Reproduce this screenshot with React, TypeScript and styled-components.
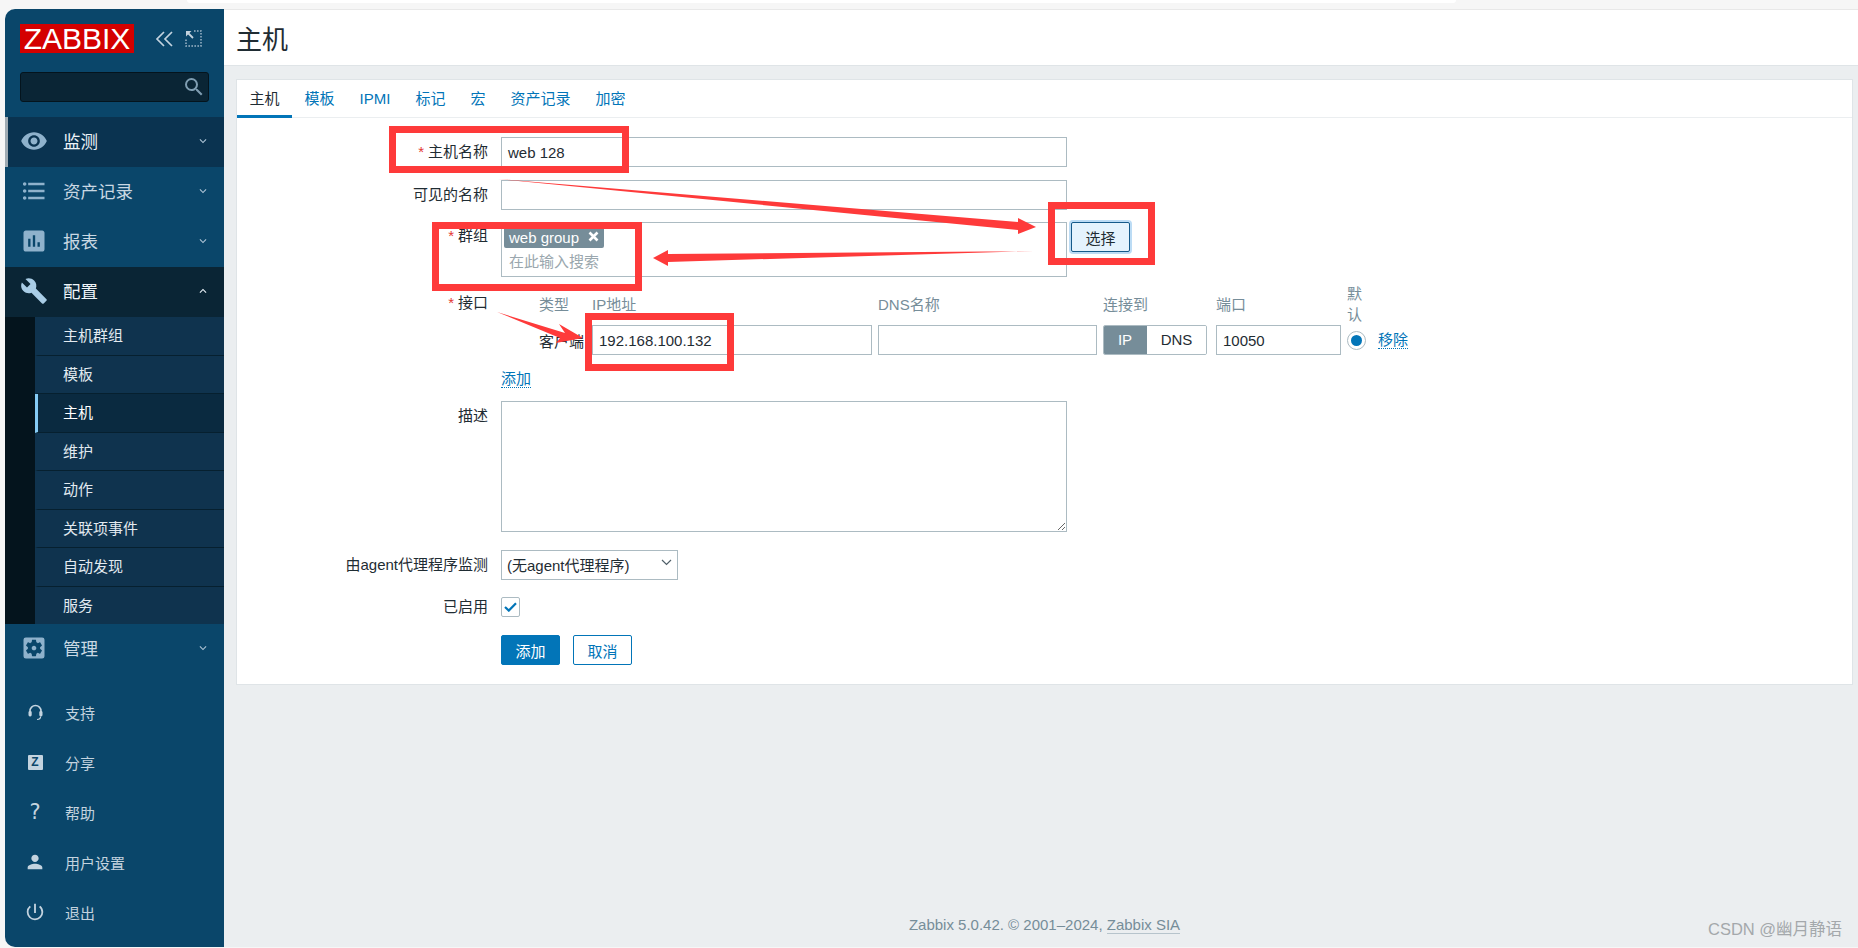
import React from 'react';
import styled, { createGlobalStyle } from 'styled-components';
import {
  MdVisibility, MdFormatListBulleted, MdAssessment, MdBuild, MdSettingsApplications,
  MdPerson, MdPowerSettingsNew, MdSearch,
  MdKeyboardArrowDown, MdKeyboardArrowUp,
} from 'react-icons/md';

const FONT = `"Liberation Sans", "Noto Sans CJK SC", sans-serif`;

const Global = createGlobalStyle`
  html, body { margin: 0; padding: 0; width: 1858px; height: 948px; overflow: hidden; background: #f6f6f6; }
  * { box-sizing: border-box; }
  body { font-family: ${FONT}; font-size: 15px; color: #1f2c33; }
`;

const Page = styled.div`
  position: relative;
  width: 1858px;
  height: 948px;
  display: flex;
  flex-direction: column;
`;

const BrowserStrip = styled.div`
  height: 9px;
  padding-left: 187px;
`;

const BrowserTab = styled.div`
  width: 1269px;
  height: 3px;
  background: #fff;
  border-radius: 0 0 8px 8px;
`;

const Shell = styled.div`
  height: 938px;
  padding-left: 5px;
  display: flex;
`;

const Sidebar = styled.aside`
  width: 219px;
  flex: none;
  background: #0a466a;
  border-radius: 10px 0 0 10px;
  display: flex;
  flex-direction: column;
  overflow: hidden;
`;

const BrandBlock = styled.div`
  height: 108px;
  padding: 15px 15px 0;
  flex: none;
`;

const BrandRow = styled.div`
  display: flex;
  align-items: center;
  height: 29px;
`;

const Logo = styled.div`
  flex: none;
  width: 114px;
  height: 29px;
  background: #d40000;
  color: #fff;
  font-family: "Liberation Sans", sans-serif;
  font-size: 30px;
  line-height: 29px;
  text-align: center;
  margin-right: 21px;
`;

const BrandIcon = styled.svg`
  display: block;
  flex: none;
  margin-right: 12px;
  &:last-child { margin-right: 0; }
`;

const SearchBox = styled.div`
  margin-top: 19px;
  width: 189px;
  height: 30px;
  background: #0a2535;
  border: 1px solid #04141d;
  border-radius: 3px;
  display: flex;
  align-items: center;
  justify-content: flex-end;
  padding-right: 2px;
  color: #7f9db1;
  font-size: 24px;
`;

const NavRow = styled.div<{ $tone?: 'hover' | 'open' }>`
  height: 50px;
  flex: none;
  display: flex;
  align-items: center;
  background: ${p => (p.$tone === 'hover' ? '#0a3350' : p.$tone === 'open' ? '#0a2535' : 'transparent')};
  border-left: 3px solid ${p => (p.$tone === 'hover' ? '#9fabb3' : 'transparent')};
  padding: 0 0 3px 12px;
  color: ${p => (p.$tone ? '#eef4f8' : '#c9d8e3')};
  font-size: 17.5px;
`;

const NavIcon = styled.span<{ $light?: boolean }>`
  width: 28px;
  height: 28px;
  margin-right: 15px;
  margin-left: 0;
  display: flex;
  align-items: center;
  justify-content: center;
  font-size: 28px;
  color: ${p => (p.$light ? '#a9cde6' : '#8fb2cc')};
`;

const NavLabel = styled.span`
  flex: 1;
`;

const NavChevron = styled.span<{ $light?: boolean }>`
  width: 16px;
  margin-right: 13px;
  display: flex;
  justify-content: center;
  font-size: 14px;
  color: ${p => (p.$light ? '#e6eef4' : '#a9c1d2')};
`;

const SubMenu = styled.div`
  height: 307px;
  flex: none;
  padding-left: 30px;
  background: #04141d;
  display: flex;
  flex-direction: column;
`;

const SubItem = styled.div<{ $active?: boolean }>`
  flex: 1;
  display: flex;
  align-items: center;
  background: ${p => (p.$active ? '#0a2a40' : '#0f334e')};
  border-bottom: 1px solid #06202f;
  border-left: 3px solid ${p => (p.$active ? '#85cbf5' : 'transparent')};
  padding: 0 0 2px 25px;
  color: ${p => (p.$active ? '#fff' : '#e2eaf0')};
  font-size: 15px;
  &:last-child { border-bottom: 0; }
`;

const BottomNav = styled.div`
  margin-top: auto;
  padding-bottom: 9px;
  display: flex;
  flex-direction: column;
`;

const BottomItem = styled.div`
  height: 50px;
  padding-bottom: 2px;
  display: flex;
  align-items: center;
  color: #c3d3df;
  font-size: 15px;
`;

const BottomIcon = styled.span`
  width: 24px;
  margin-left: 18px;
  margin-right: 18px;
  display: flex;
  justify-content: center;
  font-size: 22px;
  color: #c3d3df;
`;

const ZBadge = styled.span`
  width: 15px;
  height: 15px;
  background: #c3d3df;
  color: #0a466a;
  border-radius: 1px;
  font-size: 12px;
  font-weight: 700;
  line-height: 15px;
  text-align: center;
`;

const Question = styled.span`
  font-family: "DejaVu Sans", sans-serif;
  font-size: 21px;
  line-height: 22px;
`;

const Main = styled.main`
  flex: 1;
  min-width: 0;
  background: #ebeef0;
  display: flex;
  flex-direction: column;
`;

const PageHeader = styled.header`
  height: 57px;
  flex: none;
  background: #fff;
  border-top: 1px solid #e8e8e8;
  border-bottom: 1px solid #dfe4e7;
  padding-left: 12px;
  display: flex;
  align-items: center;
`;

const Title = styled.h1`
  margin: 0;
  font-size: 26px;
  font-weight: 400;
  color: #1f2c33;
`;

const Content = styled.div`
  padding: 13px 5px 0 12px;
`;

const Card = styled.section`
  height: 606px;
  background: #fff;
  border: 1px solid #dfe4e7;
`;

const Tabs = styled.nav`
  height: 38px;
  display: flex;
  border-bottom: 1px solid #ebeef0;
`;

const Tab = styled.a<{ $active?: boolean }>`
  height: 38px;
  padding: 0 12.5px;
  line-height: 37px;
  font-size: 15px;
  color: ${p => (p.$active ? '#1f2c33' : '#0275b8')};
  border-bottom: 3px solid ${p => (p.$active ? '#0275b8' : 'transparent')};
`;

const Form = styled.div`
  padding-top: 19px;
  display: flex;
  flex-direction: column;
`;

const Row = styled.div<{ $gap?: number }>`
  display: grid;
  grid-template-columns: 251px 1fr;
  column-gap: 13px;
  margin-top: ${p => p.$gap ?? 0}px;
  align-items: start;
`;

const Label = styled.div<{ $offset?: number; $line?: number }>`
  text-align: right;
  line-height: ${p => p.$line ?? 30}px;
  padding-top: ${p => p.$offset ?? 0}px;
  font-size: 15px;
  color: #1f2c33;
`;

const Star = styled.span`
  color: #e33734;
  margin-right: 4px;
`;

const Field = styled.div<{ $w?: number }>`
  width: ${p => p.$w ?? 566}px;
  height: 30px;
  background: #fff;
  border: 1px solid #acbbc2;
  padding: 0 6px;
  line-height: 29px;
  font-size: 15px;
  color: #1f2c33;
`;

const GroupLine = styled.div`
  display: flex;
  gap: 4px;
`;

const MultiSelect = styled.div`
  width: 566px;
  height: 55px;
  border: 1px solid #acbbc2;
  padding: 4px 2px 0;
`;

const TagChip = styled.span`
  display: inline-flex;
  align-items: center;
  height: 21px;
  padding: 0 5px 0 5px;
  gap: 9px;
  background: #768d99;
  color: #fff;
  border-radius: 2px;
  font-size: 15px;
`;

const TagClose = styled.svg`
  display: block;
  margin-top: -2px;
`;

const Placeholder = styled.div`
  margin-top: 3px;
  padding-left: 5px;
  color: #9aa7ae;
  line-height: 22px;
`;

const SelectButton = styled.button`
  width: 59px;
  height: 30px;
  background: #e5f3fd;
  border: 1px solid #155a8a;
  border-radius: 2px;
  box-shadow: 0 0 0 2px #bcdcf5;
  font: 15px ${FONT};
  color: #1f2c33;
  padding: 0;
`;

const IfaceGrid = styled.div`
  padding-left: 38px;
  display: grid;
  grid-template-columns: 47px 280px 219px 104px 128px 19px auto;
  column-gap: 6px;
  align-items: center;
`;

const HeadCell = styled.div<{ $inset?: boolean }>`
  color: #768d99;
  font-size: 15px;
  line-height: 21px;
  white-space: nowrap;
  padding-left: ${p => (p.$inset ? 3 : 0)}px;
  align-self: center;
`;

const WrapHead = styled(HeadCell)`
  white-space: normal;
  width: 17px;
`;

const RowName = styled.div`
  white-space: nowrap;
  font-size: 15px;
`;

const PortCell = styled.div`
  padding-left: 3px;
`;

const Seg = styled.div`
  display: flex;
  width: 104px;
  height: 30px;
  border: 1px solid #acbbc2;
  border-radius: 2px;
  overflow: hidden;
`;

const SegItem = styled.div<{ $on?: boolean }>`
  flex: ${p => (p.$on ? '0 0 44px' : 1)};
  margin: ${p => (p.$on ? '-1px 0 -1px -1px' : 0)};
  text-align: center;
  line-height: ${p => (p.$on ? 30 : 28)}px;
  background: ${p => (p.$on ? '#768d99' : '#fff')};
  color: ${p => (p.$on ? '#fff' : '#1f2c33')};
`;

const Radio = styled.span`
  width: 19px;
  height: 19px;
  border: 1px solid #acbbc2;
  border-radius: 50%;
  display: flex;
  align-items: center;
  justify-content: center;
  &::after {
    content: '';
    width: 11px;
    height: 11px;
    border-radius: 50%;
    background: #0275b8;
  }
`;

const DottedLink = styled.a`
  color: #0275b8;
  border-bottom: 1px dotted #0275b8;
  font-size: 15px;
  line-height: 17px;
  display: inline-block;
`;

const RemoveLink = styled(DottedLink)`
  margin-left: 6px;
  justify-self: start;
`;

const TextArea = styled.textarea`
  display: block;
  width: 566px;
  height: 131px;
  border: 1px solid #acbbc2;
  background: #fff;
  resize: both;
  margin: 0;
  outline: none;
`;

const SelectBox = styled(Field)`
  width: 177px;
  display: flex;
  align-items: center;
  justify-content: space-between;
  padding: 0 0 0 5px;
  white-space: nowrap;
`;

const SelectCaret = styled.svg`
  display: block;
  margin: -5px 5px 0 0;
`;

const CheckBox = styled.span`
  width: 19px;
  height: 20px;
  border: 1px solid #acbbc2;
  border-radius: 2px;
  display: flex;
  align-items: center;
  justify-content: center;
`;

const Buttons = styled.div`
  display: flex;
  gap: 13px;
`;

const ActionButton = styled.button<{ $primary?: boolean }>`
  width: 59px;
  height: 30px;
  padding: 0;
  border-radius: 2px;
  border: 1px solid #0275b8;
  background: ${p => (p.$primary ? '#0275b8' : '#fff')};
  color: ${p => (p.$primary ? '#fff' : '#0275b8')};
  font: 15px ${FONT};
`;

const Footer = styled.footer`
  margin-top: auto;
  padding: 0 5px 12px 12px;
  text-align: center;
  font-size: 15px;
  line-height: 20px;
  color: #768d99;
`;

const FooterLink = styled.a`
  border-bottom: 1px solid #b7c4cc;
`;

const Watermark = styled.div`
  position: absolute;
  left: 1708px;
  top: 919px;
  font-size: 16.5px;
  line-height: 20px;
  color: #a4a8ab;
  white-space: nowrap;
`;

const Annotations = styled.svg`
  position: absolute;
  left: 0;
  top: 0;
  pointer-events: none;
`;

const RED = '#fe3a3a';

const navTop = [
  { key: 'a', icon: <MdVisibility />, label: '监测', tone: 'hover' as const },
  { key: 'b', icon: <MdFormatListBulleted />, label: '资产记录' },
  { key: 'c', icon: <MdAssessment />, label: '报表' },
];

const subItems = ['主机群组', '模板', '主机', '维护', '动作', '关联项事件', '自动发现', '服务'];
const tabs = ['主机', '模板', 'IPMI', '标记', '宏', '资产记录', '加密'];

export default function App() {
  return (
    <Page>
      <Global />
      <BrowserStrip><BrowserTab /></BrowserStrip>
      <Shell>
        <Sidebar>
          <BrandBlock>
            <BrandRow>
              <Logo>ZABBIX</Logo>
              <BrandIcon width="18" height="16" viewBox="0 0 18 16" fill="none" stroke="#c3d3df" strokeWidth="1.7">
                <path d="M9 1 2 8l7 7M17 1l-7 7 7 7" />
              </BrandIcon>
              <BrandIcon width="17" height="17" viewBox="0 0 17 17" fill="none" stroke="#9db6c8" strokeWidth="1.5">
                <path d="M9 1h7v15H1V9" strokeDasharray="1.6 1.4" />
                <path d="M1 1h5.5L1 6.5z" fill="#c3d3df" stroke="none" />
                <path d="M3 3l5 5" stroke="#c3d3df" strokeWidth="1.8" />
              </BrandIcon>
            </BrandRow>
            <SearchBox><MdSearch /></SearchBox>
          </BrandBlock>
          {navTop.map(n => (
            <NavRow key={n.key} $tone={n.tone}>
              <NavIcon>{n.icon}</NavIcon>
              <NavLabel>{n.label}</NavLabel>
              <NavChevron><MdKeyboardArrowDown /></NavChevron>
            </NavRow>
          ))}
          <NavRow $tone="open">
            <NavIcon $light><MdBuild /></NavIcon>
            <NavLabel>配置</NavLabel>
            <NavChevron $light><MdKeyboardArrowUp /></NavChevron>
          </NavRow>
          <SubMenu>
            {subItems.map(s => (
              <SubItem key={s} $active={s === '主机'}>{s}</SubItem>
            ))}
          </SubMenu>
          <NavRow>
            <NavIcon><MdSettingsApplications /></NavIcon>
            <NavLabel>管理</NavLabel>
            <NavChevron><MdKeyboardArrowDown /></NavChevron>
          </NavRow>
          <BottomNav>
            <BottomItem>
              <BottomIcon>
                <svg width="15" height="17" viewBox="0 0 15 17" fill="none">
                  <path d="M2 9V7a5.5 5.5 0 0 1 11 0v2" stroke="#c3d3df" strokeWidth="1.6" />
                  <rect x="0.5" y="7" width="3.2" height="5.5" rx="1.4" fill="#c3d3df" />
                  <rect x="11.3" y="7" width="3.2" height="5.5" rx="1.4" fill="#c3d3df" />
                  <path d="M12.6 12.5c0 2-1.4 3-3.6 3" stroke="#c3d3df" strokeWidth="1.2" />
                </svg>
              </BottomIcon>
              支持
            </BottomItem>
            <BottomItem><BottomIcon><ZBadge>Z</ZBadge></BottomIcon>分享</BottomItem>
            <BottomItem><BottomIcon><Question>?</Question></BottomIcon>帮助</BottomItem>
            <BottomItem><BottomIcon><MdPerson /></BottomIcon>用户设置</BottomItem>
            <BottomItem><BottomIcon><MdPowerSettingsNew /></BottomIcon>退出</BottomItem>
          </BottomNav>
        </Sidebar>
        <Main>
          <PageHeader><Title>主机</Title></PageHeader>
          <Content>
            <Card>
              <Tabs>
                {tabs.map((t, i) => <Tab key={t} $active={i === 0}>{t}</Tab>)}
              </Tabs>
              <Form>
                <Row>
                  <Label><Star>*</Star>主机名称</Label>
                  <Field>web 128</Field>
                </Row>
                <Row $gap={13}>
                  <Label>可见的名称</Label>
                  <Field />
                </Row>
                <Row $gap={12}>
                  <Label $line={28}><Star>*</Star>群组</Label>
                  <GroupLine>
                    <MultiSelect>
                      <TagChip>
                        web group
                        <TagClose width="11" height="11" viewBox="0 0 11 11" fill="none" stroke="#fff" strokeWidth="2.6">
                          <path d="M1.5 1.5l8 8M9.5 1.5l-8 8" />
                        </TagClose>
                      </TagChip>
                      <Placeholder>在此输入搜索</Placeholder>
                    </MultiSelect>
                    <SelectButton>选择</SelectButton>
                  </GroupLine>
                </Row>
                <Row $gap={6}>
                  <Label $offset={5}><Star>*</Star>接口</Label>
                  <div>
                    <IfaceGrid>
                      <HeadCell>类型</HeadCell>
                      <HeadCell>IP地址</HeadCell>
                      <HeadCell>DNS名称</HeadCell>
                      <HeadCell>连接到</HeadCell>
                      <HeadCell $inset>端口</HeadCell>
                      <WrapHead>默认</WrapHead>
                      <span />
                      <RowName>客户端</RowName>
                      <Field $w={280}>192.168.100.132</Field>
                      <Field $w={219} />
                      <Seg><SegItem $on>IP</SegItem><SegItem>DNS</SegItem></Seg>
                      <PortCell><Field $w={125}>10050</Field></PortCell>
                      <Radio />
                      <RemoveLink>移除</RemoveLink>
                    </IfaceGrid>
                  </div>
                </Row>
                <Row $gap={15}>
                  <span />
                  <div><DottedLink>添加</DottedLink></div>
                </Row>
                <Row $gap={13}>
                  <Label>描述</Label>
                  <TextArea />
                </Row>
                <Row $gap={18}>
                  <Label>由agent代理程序监测</Label>
                  <SelectBox>
                    (无agent代理程序)
                    <SelectCaret width="11" height="7" viewBox="0 0 11 7" fill="none" stroke="#4f5f68" strokeWidth="1.2">
                      <path d="M1 1l4.5 4.5L10 1" />
                    </SelectCaret>
                  </SelectBox>
                </Row>
                <Row $gap={17}>
                  <Label $line={20}>已启用</Label>
                  <CheckBox>
                    <svg width="13" height="10" viewBox="0 0 13 10" fill="none" stroke="#0275b8" strokeWidth="2.2">
                      <path d="M1 5l3.8 3.6L12 1.2" />
                    </svg>
                  </CheckBox>
                </Row>
                <Row $gap={18}>
                  <span />
                  <Buttons>
                    <ActionButton $primary>添加</ActionButton>
                    <ActionButton>取消</ActionButton>
                  </Buttons>
                </Row>
              </Form>
            </Card>
          </Content>
          <Footer>Zabbix 5.0.42. © 2001–2024, <FooterLink>Zabbix SIA</FooterLink></Footer>
        </Main>
      </Shell>
      <Watermark>CSDN @幽月静语</Watermark>
      <Annotations width="1858" height="948" viewBox="0 0 1858 948" fill="none">
        <g stroke={RED} strokeWidth="7">
          <rect x="392.5" y="129.5" width="233" height="40" />
          <rect x="435.5" y="225.5" width="203" height="62" />
          <rect x="588.5" y="316.5" width="142" height="51" />
          <rect x="1051.5" y="205.5" width="100" height="56" />
        </g>
        <g fill={RED}>
          <polygon points="498,179 1018,222 1018,218 1036,227 1018,234 1018,230" />
          <polygon points="1034,251 668,254 668,250 653,258 668,266 668,262" />
          <polygon points="497,312 565,333 559,324 583,338 556,343 560,338" />
        </g>
      </Annotations>
    </Page>
  );
}
